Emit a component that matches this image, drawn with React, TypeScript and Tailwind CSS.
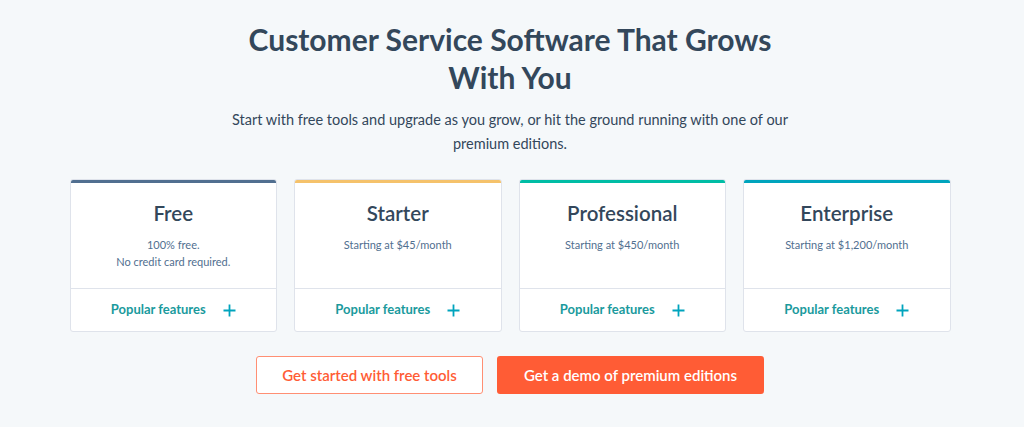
import React from "react";

const plans = [
  { name: "Free", bar: "bg-[#516f90]", lines: ["100% free.", "No credit card required."] },
  { name: "Starter", bar: "bg-[#f5c26b]", lines: ["Starting at $45/month"] },
  { name: "Professional", bar: "bg-[#00bda5]", lines: ["Starting at $450/month"] },
  { name: "Enterprise", bar: "bg-[#00a4bd]", lines: ["Starting at $1,200/month"] },
];

function Plus() {
  return (
    <svg width="13" height="13" viewBox="0 0 13 13" className="ml-[17px]">
      <path d="M6.5 0.5v12M0.5 6.5h12" stroke="#00a4bd" strokeWidth="1.8" fill="none" />
    </svg>
  );
}

export default function App() {
  return (
    <div
      className="w-[1024px] h-[427px] bg-[#f5f8fa] flex flex-col items-center pr-[4px] text-[#33475b] overflow-hidden"
      style={{ fontFamily: "Lato, 'Noto Sans', sans-serif" }}
    >
      <h1 className="mt-[20px] max-w-[560px] text-center text-[30px] leading-[38px] font-bold text-[#33475b]">
        Customer Service Software That Grows With You
      </h1>
      <p className="mt-[12px] max-w-[570px] text-center text-[14.5px] leading-[24px] text-[#33475b]">
        Start with free tools and upgrade as you grow, or hit the ground running with one of our premium editions.
      </p>
      <div className="mt-[23px] w-[881px] grid grid-cols-4 gap-[17px]">
        {plans.map((p) => (
          <div key={p.name} className="bg-white border border-[#dfe3eb] rounded-[3px] flex flex-col overflow-hidden">
            <div className={`h-[4px] ${p.bar} -mx-px -mt-px`} />
            <div className="h-[105px] flex flex-col items-center pt-[17px]">
              <div className="text-[20.5px] leading-[26px] font-semibold text-[#33475b]">{p.name}</div>
              <div className="mt-[10px] flex flex-col items-center text-[11px] leading-[17px] text-[#516f90]">
                {p.lines.map((l) => (
                  <div key={l}>{l}</div>
                ))}
              </div>
            </div>
            <div className="h-[43px] border-t border-[#dfe3eb] flex items-center justify-center">
              <span className="text-[13px] font-bold text-[#1a9a9d]">Popular features</span>
              <Plus />
            </div>
          </div>
        ))}
      </div>
      <div className="mt-[24px] flex gap-[14px]">
        <button className="w-[227px] h-[38px] bg-white border border-[#ff8f73] rounded-[3px] text-[#ff5c35] text-[15px] font-semibold">
          Get started with free tools
        </button>
        <button className="w-[267px] h-[38px] bg-[#ff5c35] rounded-[3px] text-white text-[15px] font-semibold">
          Get a demo of premium editions
        </button>
      </div>
    </div>
  );
}
